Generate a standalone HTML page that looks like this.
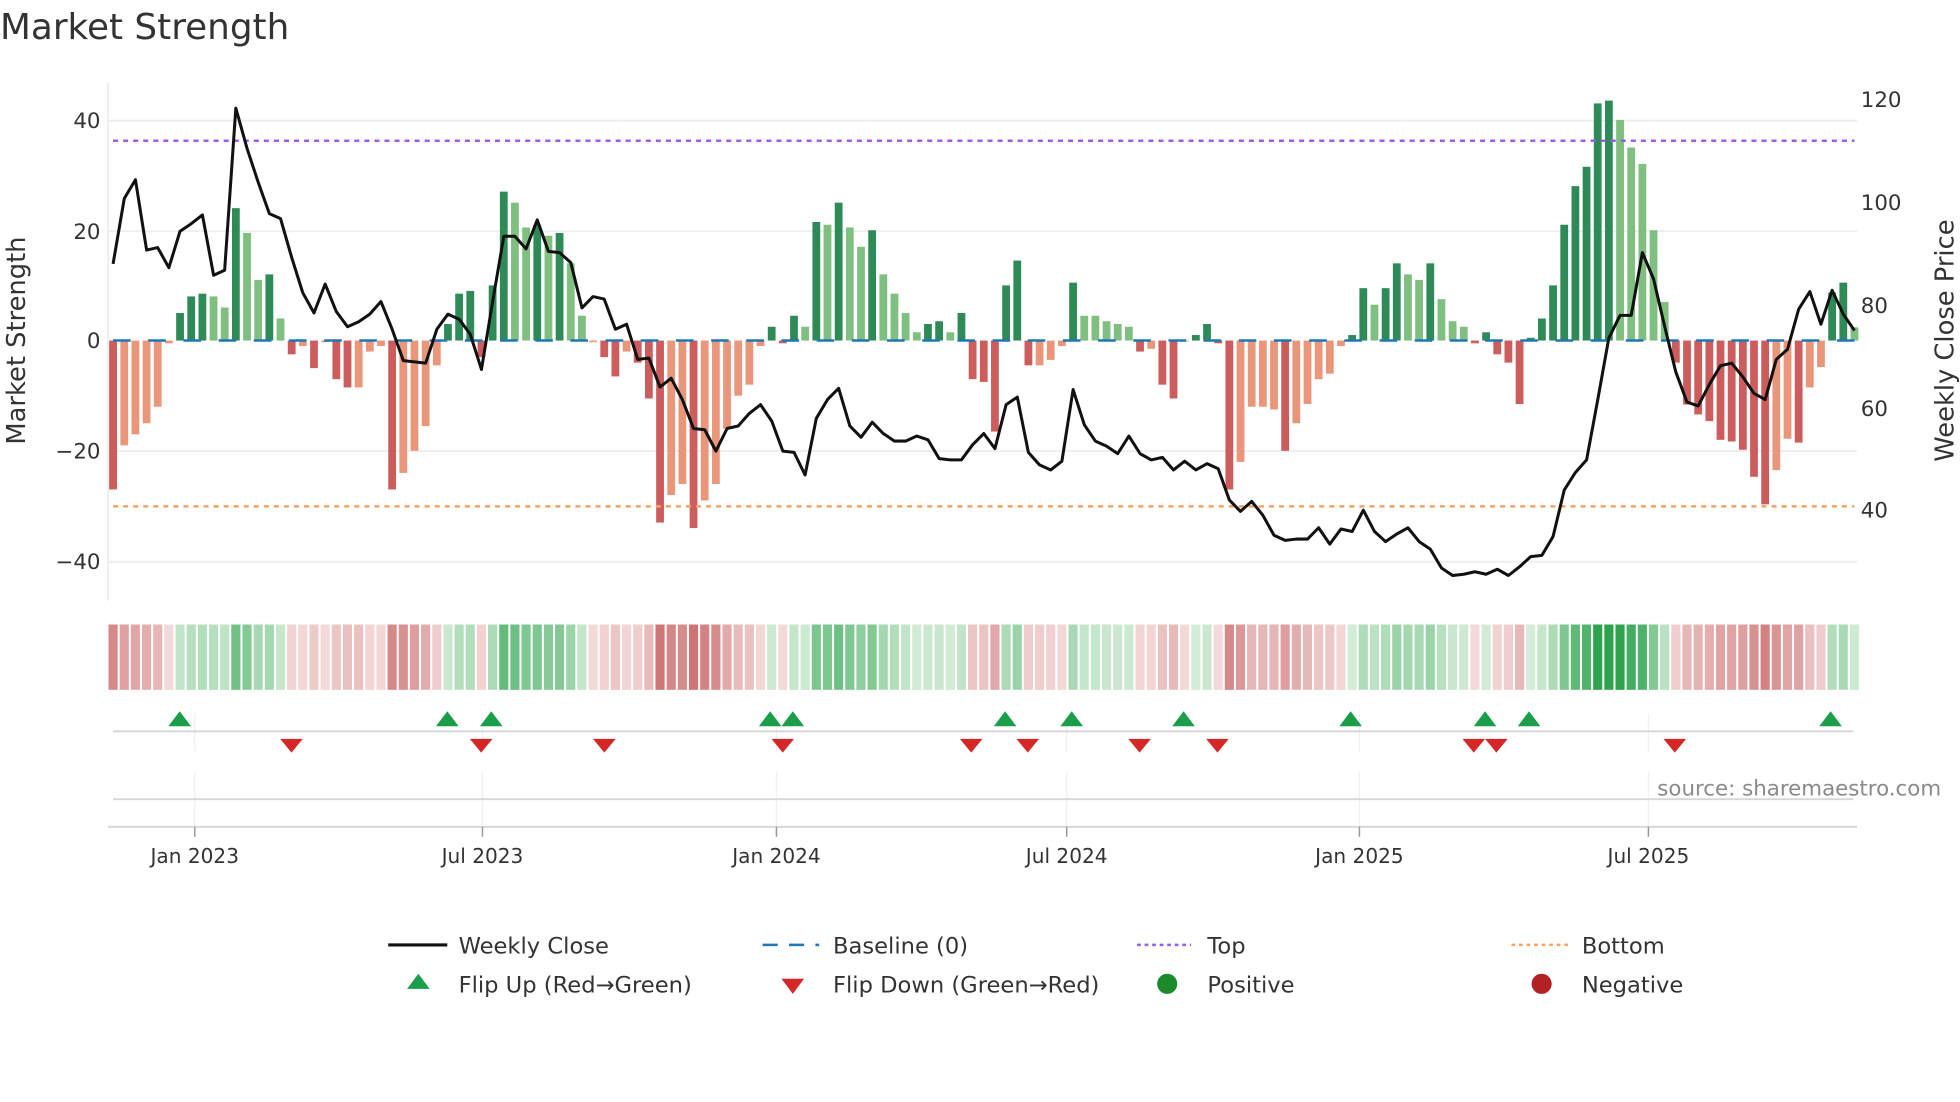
<!DOCTYPE html>
<html><head><meta charset="utf-8"><style>
html,body{margin:0;padding:0;background:#fff;width:1960px;height:1102px;overflow:hidden}
svg{display:block}
text{font-family:"DejaVu Sans","Liberation Sans",sans-serif;fill:#333}
</style></head><body>
<svg id="s" width="1960" height="1102" viewBox="0 0 1560 877" xmlns="http://www.w3.org/2000/svg">
<rect width="1560" height="877" fill="#fff"/>
<text x="0" y="31" font-size="28.5">Market Strength</text>
<g stroke="#eceef1" stroke-width="1.5">
<line x1="86" y1="96" x2="1478" y2="96"/><line x1="86" y1="184" x2="1478" y2="184"/>
<line x1="86" y1="359" x2="1478" y2="359"/><line x1="86" y1="447" x2="1478" y2="447"/>
<line x1="86" y1="66" x2="86" y2="478"/>
</g>
<g font-size="17" text-anchor="end">
<text x="80" y="102">40</text><text x="80" y="190">20</text><text x="80" y="277">0</text>
<text x="80" y="365">−20</text><text x="80" y="453">−40</text>
</g>
<g font-size="17">
<text x="1481" y="85">120</text><text x="1481" y="167">100</text><text x="1481" y="249">80</text>
<text x="1481" y="331">60</text><text x="1481" y="412">40</text>
</g>
<text transform="translate(20,271) rotate(-90)" font-size="20.5" text-anchor="middle">Market Strength</text>
<text transform="translate(1555,271) rotate(-90)" font-size="20.5" text-anchor="middle">Weekly Close Price</text>
<g id="bars"></g>
<line x1="90" y1="271" x2="1476" y2="271" stroke="#1f77b4" stroke-width="2" stroke-dasharray="14 14"/>
<line x1="90" y1="112" x2="1476" y2="112" stroke="#9b5de5" stroke-width="2" stroke-dasharray="4 4"/>
<line x1="90" y1="403" x2="1476" y2="403" stroke="#f4a460" stroke-width="2" stroke-dasharray="4 4"/>
<polyline id="price" fill="none" stroke="#111" stroke-width="2.4" stroke-linejoin="round"/>
<g id="heat"></g>
<g stroke="#eef0f4" stroke-width="1">
<line x1="155" y1="568" x2="155" y2="598"/><line x1="384" y1="568" x2="384" y2="598"/>
<line x1="618" y1="568" x2="618" y2="598"/><line x1="849" y1="568" x2="849" y2="598"/>
<line x1="1082" y1="568" x2="1082" y2="598"/><line x1="1312" y1="568" x2="1312" y2="598"/>
<line x1="155" y1="614" x2="155" y2="658"/><line x1="384" y1="614" x2="384" y2="658"/>
<line x1="618" y1="614" x2="618" y2="658"/><line x1="849" y1="614" x2="849" y2="658"/>
<line x1="1082" y1="614" x2="1082" y2="658"/><line x1="1312" y1="614" x2="1312" y2="658"/>
</g>
<line x1="90" y1="582" x2="1475" y2="582" stroke="#d4d6da" stroke-width="1.5"/>
<line x1="90" y1="636" x2="1475" y2="636" stroke="#d4d6da" stroke-width="1.5"/>
<line x1="86" y1="658" x2="1478" y2="658" stroke="#d4d6da" stroke-width="1.5"/>
<g stroke="#999" stroke-width="1.2">
<line x1="155" y1="658" x2="155" y2="666"/><line x1="384" y1="658" x2="384" y2="666"/>
<line x1="618" y1="658" x2="618" y2="666"/><line x1="849" y1="658" x2="849" y2="666"/>
<line x1="1082" y1="658" x2="1082" y2="666"/><line x1="1312" y1="658" x2="1312" y2="666"/>
</g>
<g id="mk"></g>
<g font-size="16" text-anchor="middle">
<text x="155" y="687">Jan 2023</text><text x="384" y="687">Jul 2023</text>
<text x="618" y="687">Jan 2024</text><text x="849" y="687">Jul 2024</text>
<text x="1082" y="687">Jan 2025</text><text x="1312" y="687">Jul 2025</text>
</g>
<text x="1545" y="633" font-size="17" text-anchor="end" style="fill:#8a8a8a">source: sharemaestro.com</text>
<g font-size="18">
<line x1="309" y1="752" x2="356" y2="752" stroke="#111" stroke-width="2.5"/>
<text x="365" y="759">Weekly Close</text>
<line x1="607" y1="752" x2="652" y2="752" stroke="#1f77b4" stroke-width="2" stroke-dasharray="12 9"/>
<text x="663" y="759">Baseline (0)</text>
<line x1="905" y1="752" x2="948" y2="752" stroke="#9b5de5" stroke-width="2" stroke-dasharray="3 3"/>
<text x="961" y="759">Top</text>
<line x1="1203" y1="752" x2="1248" y2="752" stroke="#f4a460" stroke-width="2" stroke-dasharray="3 3"/>
<text x="1259" y="759">Bottom</text>
<polygon points="333,775 342,787 324,787" fill="#1a9e4a"/>
<text x="365" y="790">Flip Up (Red→Green)</text>
<polygon points="622,779 640,779 631,791" fill="#d62728"/>
<text x="663" y="790">Flip Down (Green→Red)</text>
<circle cx="929" cy="783" r="8" fill="#1a8a2a"/>
<text x="961" y="790">Positive</text>
<circle cx="1227" cy="783" r="8" fill="#b22222"/>
<text x="1259" y="790">Negative</text>
</g>
</svg>
<script>
var V=[["d",-27],["l",-19],["l",-17],["l",-15],["l",-12],["l",-0.5],["G",5],["G",8],["G",8.5],["g",8],["g",6],["G",24],["g",19.5],["g",11],["G",12],["g",4],["d",-2.5],["l",-1],["d",-5],["l",-0.3],["d",-7],["d",-8.5],["l",-8.5],["l",-2],["l",-1],["d",-27],["l",-24],["l",-20],["l",-15.5],["l",-4.5],["G",3],["G",8.5],["G",9],["d",-3],["G",10],["G",27],["g",25],["g",20.5],["G",21],["g",19],["G",19.5],["g",14],["g",4.5],["l",-0.3],["d",-3],["d",-6.5],["l",-2],["d",-4],["d",-10.5],["d",-33],["l",-28],["l",-26],["d",-34],["l",-29],["l",-26],["l",-16],["l",-10],["l",-8],["l",-1],["G",2.5],["d",-0.5],["G",4.5],["g",2.5],["G",21.5],["g",21],["G",25],["g",20.5],["g",17],["G",20],["g",12],["g",8.5],["g",5],["g",1.5],["G",3],["G",3.5],["g",1.5],["G",5],["d",-7],["d",-7.5],["d",-16.5],["G",10],["G",14.5],["d",-4.5],["l",-4.5],["l",-3.5],["l",-1],["G",10.5],["g",4.5],["g",4.5],["g",3.5],["g",3],["g",2.5],["d",-2],["l",-1.5],["d",-8],["d",-10.5],["l",-0.2],["G",1],["G",3],["d",-0.5],["d",-27],["l",-22],["l",-12],["l",-12],["l",-12.5],["d",-20],["l",-15],["l",-11.5],["l",-7],["l",-6],["l",-1],["G",1],["G",9.5],["g",6.5],["G",9.5],["G",14],["g",12],["g",11],["G",14],["g",7.5],["g",3.5],["g",2.5],["d",-0.5],["G",1.5],["d",-2.5],["d",-4],["d",-11.5],["G",0.5],["G",4],["G",10],["G",21],["G",28],["G",31.5],["G",43],["G",43.5],["g",40],["g",35],["g",32],["g",20],["g",7],["d",-4],["d",-11.6],["d",-13.4],["d",-14.6],["d",-18],["d",-18.3],["d",-19.8],["d",-24.7],["d",-29.7],["l",-23.5],["l",-17.8],["d",-18.5],["l",-8.5],["l",-4.8],["G",8.7],["G",10.5],["g",2.4]];
var P=[210,158,143,199,197,213,184,178,171,219,215,86,118,145,170,174,205,233,249,226,248,260,256,250,240,262,287,288,289,262,250,254,266,294,240,188,188,198,175,200,201,209,245,236,238,262,258,286,285,308,301,318,341,342,359,341,339,329,322,335,359,360,378,333,318,309,339,348,336,345,351,351,347,350,365,366,366,354,345,357,322,316,360,370,374,367,310,338,351,355,361,347,361,366,364,374,367,374,369,373,398,407,399,410,426,430,429,429,420,433,421,423,406,423,431,425,420,431,437,452,458,457,455,457,453,458,451,443,442,427,390,376,366,318,269,251,251,201,222,260,296,320,323,306,291,289,300,313,318,286,278,246,232,258,231,250,263];
var n=V.length,x0=90,x1=1476,st=(x1-x0)/(n-1),ns="http://www.w3.org/2000/svg";
var col={d:"#cd5c5c",l:"#e9967a",G:"#2e8b57",g:"#7fbf7f"};
var B=document.getElementById("bars"),H=document.getElementById("heat");
function el(t,a,p){var e=document.createElementNS(ns,t);for(var k in a)e.setAttribute(k,a[k]);p.appendChild(e);return e;}
for(var i=0;i<n;i++){var x=x0+i*st,v=V[i][1],h=Math.abs(v)*4.39;
 el("rect",{x:x-3.1,y:v>0?271-h:271,width:6.2,height:h,fill:col[V[i][0]]},B);
 var a=Math.min(1,Math.abs(v)/40),c;
 if(v>=0){c="rgb("+Math.round(215-170*a)+","+Math.round(238-75*a)+","+Math.round(218-140*a)+")";}
 else{c="rgb("+Math.round(244-45*a)+","+Math.round(218-120*a)+","+Math.round(218-120*a)+")";}
 el("rect",{x:x-4.45+0.8,y:497,width:st-1.6,height:52,fill:c},H);}
var pts=[];for(var i=0;i<P.length;i++){pts.push((x0+i*(x1-x0)/(P.length-1)).toFixed(1)+","+P[i]);}
document.getElementById("price").setAttribute("points",pts.join(" "));
var M=document.getElementById("mk");
[143,356,391,613,631,800,853,942,1075,1182,1217,1457].forEach(function(x){el("polygon",{points:x+",566 "+(x+9)+",578 "+(x-9)+",578",fill:"#1a9e4a"},M);});
[232,383,481,623,773,818,907,969,1173,1191,1333].forEach(function(x){el("polygon",{points:(x-9)+",588 "+(x+9)+",588 "+x+",599",fill:"#d62728"},M);});
</script>
</body></html>
